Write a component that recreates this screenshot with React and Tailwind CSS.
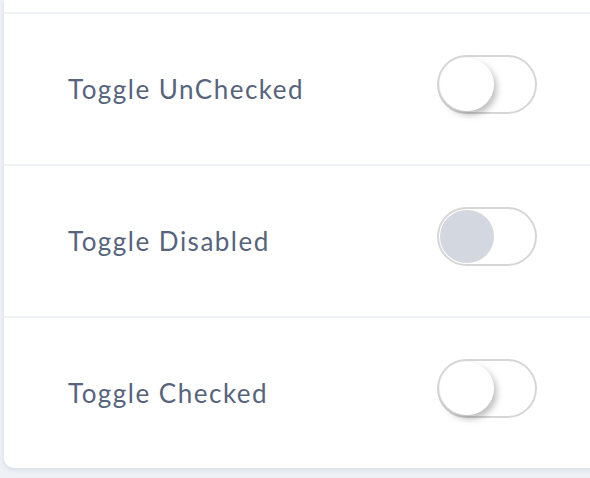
import React from 'react';

const Toggle = ({ disabled }) => {
  return (
    <div className="w-[100px] h-[59px] rounded-full border-2 border-[#d6d6d6] bg-white flex items-center px-[1px]">
      <div
        className={`w-[54px] h-[53px] rounded-full ${
          disabled ? 'bg-[#d3d7df]' : 'bg-white shadow-[3px_4px_6px_rgba(0,0,0,0.25)]'
        }`}
      />
    </div>
  );
};

const rows = [
  { label: 'Toggle UnChecked' },
  { label: 'Toggle Disabled', disabled: true },
  { label: 'Toggle Checked' },
];

export default function App() {
  return (
    <div className="w-[590px] h-[478px] overflow-hidden bg-[#eef1f6] pl-[4px]" style={{ fontFamily: 'Lato, "Open Sans", sans-serif' }}>
      <div className="w-[640px] bg-white rounded-b-[10px] shadow-[0_2px_4px_rgba(150,160,180,0.25)]">
        <div className="h-[12px]" />
        {rows.map((row) => (
          <div key={row.label} className="h-[152px] border-t-2 border-[#eef1f5] flex items-center pl-[64px] pb-[10px]">
            <span className="w-[369px] text-[26px] tracking-[1.5px] text-[#56647c] pt-[10px]">{row.label}</span>
            <Toggle disabled={row.disabled} />
          </div>
        ))}
      </div>
    </div>
  );
}
